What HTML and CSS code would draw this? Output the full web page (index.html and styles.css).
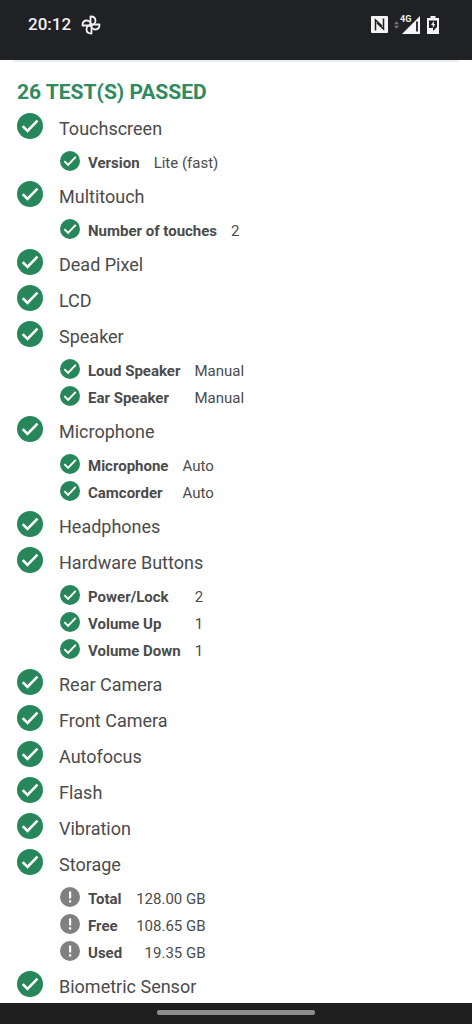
FILE: index.html
```html
<!DOCTYPE html>
<html lang="en">
<head>
<meta charset="utf-8">
<meta name="viewport" content="width=device-width, initial-scale=1">
<title>Test results</title>
<link rel="stylesheet" href="styles.css">
</head>
<body>
<svg class="sprite" aria-hidden="true">
  <symbol id="pass" viewBox="0 0 26 26"><circle cx="13" cy="13" r="13" fill="#28875a"/><path d="M5.700 13.200l4.800 4.800 10-10.300" fill="none" stroke="#fff" stroke-width="2.600"/></symbol>
  <symbol id="info" viewBox="0 0 20 20"><circle cx="10" cy="10" r="10" fill="#808080"/><path d="M9 4.6h2.200v7H9zM9 13.200h2.200v2.200H9z" fill="#fff"/></symbol>
</svg>
<header class="status">
  <span class="clock">20:12</span>
  <svg class="fan" viewBox="0 0 20 20" aria-hidden="true"><g fill="none" stroke="#f2f2f4" stroke-width="1.800" stroke-linejoin="round"><path d="M9.500 10V1.500c3.200 0 5 2 5 4.300S12.500 10 9.500 10z"/><path d="M10 9.500h8.500c0 3.200-2 5-4.300 5S10 12.500 10 9.500z"/><path d="M10.500 10v8.500c-3.200 0-5-2-5-4.300S7.500 10 10.500 10z"/><path d="M10 10.500H1.500c0-3.200 2-5 4.300-5S10 7.500 10 10.500z"/></g></svg>
  <div class="signals">
    <svg class="nfc" viewBox="0 0 17 17" aria-hidden="true"><rect width="17" height="17" rx="1" fill="#f5f5f5"/><path d="M4.500 14.500V4l6.500 6M12.500 2.500V13L6 7" fill="none" stroke="#202124" stroke-width="1.500"/></svg>
    <svg class="data" viewBox="0 0 6 10" aria-hidden="true"><path d="M0 4l3-3.500L6 4zM0 6l3 3.500L6 6z" fill="#777"/></svg>
    <span class="cell">
      <svg class="bars" viewBox="0 0 18 18" aria-hidden="true"><path d="M18 0v18H0z" fill="#f5f5f5"/><path d="M15 5.500v10" stroke="#202124" stroke-width="1.800"/></svg>
      <span class="net">4G</span>
    </span>
    <svg class="battery" viewBox="0 0 12 18" aria-hidden="true"><path d="M3.500 0h5v2H12v16H0V2h3.500z" fill="#f5f5f5"/><path d="M2 4.500h8v6.500L6 15v-3H2z" fill="#202124"/><path d="M6.800 5L4 9h1.800v3L8.300 8H6.800z" fill="#f5f5f5"/></svg>
  </div>
</header>
<main class="results">
  <hr class="rule">
  <h1 class="title">26 TEST(S) PASSED</h1>
  <ul class="tests">
    <li><h2 class="test"><svg class="mark"><use href="#pass"/></svg>Touchscreen</h2>
      <table class="details"><tr><th scope="row"><svg class="dot"><use href="#pass"/></svg>Version</th><td>Lite (fast)</td></tr></table></li>
    <li><h2 class="test"><svg class="mark"><use href="#pass"/></svg>Multitouch</h2>
      <table class="details"><tr><th scope="row"><svg class="dot"><use href="#pass"/></svg>Number of touches</th><td>2</td></tr></table></li>
    <li><h2 class="test"><svg class="mark"><use href="#pass"/></svg>Dead Pixel</h2></li>
    <li><h2 class="test"><svg class="mark"><use href="#pass"/></svg>LCD</h2></li>
    <li><h2 class="test"><svg class="mark"><use href="#pass"/></svg>Speaker</h2>
      <table class="details"><tr><th scope="row"><svg class="dot"><use href="#pass"/></svg>Loud Speaker</th><td>Manual</td></tr><tr><th scope="row"><svg class="dot"><use href="#pass"/></svg>Ear Speaker</th><td>Manual</td></tr></table></li>
    <li><h2 class="test"><svg class="mark"><use href="#pass"/></svg>Microphone</h2>
      <table class="details"><tr><th scope="row"><svg class="dot"><use href="#pass"/></svg>Microphone</th><td>Auto</td></tr><tr><th scope="row"><svg class="dot"><use href="#pass"/></svg>Camcorder</th><td>Auto</td></tr></table></li>
    <li><h2 class="test"><svg class="mark"><use href="#pass"/></svg>Headphones</h2></li>
    <li><h2 class="test"><svg class="mark"><use href="#pass"/></svg>Hardware Buttons</h2>
      <table class="details"><tr><th scope="row"><svg class="dot"><use href="#pass"/></svg>Power/Lock</th><td>2</td></tr><tr><th scope="row"><svg class="dot"><use href="#pass"/></svg>Volume Up</th><td>1</td></tr><tr><th scope="row"><svg class="dot"><use href="#pass"/></svg>Volume Down</th><td>1</td></tr></table></li>
    <li><h2 class="test"><svg class="mark"><use href="#pass"/></svg>Rear Camera</h2></li>
    <li><h2 class="test"><svg class="mark"><use href="#pass"/></svg>Front Camera</h2></li>
    <li><h2 class="test"><svg class="mark"><use href="#pass"/></svg>Autofocus</h2></li>
    <li><h2 class="test"><svg class="mark"><use href="#pass"/></svg>Flash</h2></li>
    <li><h2 class="test"><svg class="mark"><use href="#pass"/></svg>Vibration</h2></li>
    <li><h2 class="test"><svg class="mark"><use href="#pass"/></svg>Storage</h2>
      <table class="details amounts"><tr><th scope="row"><svg class="dot"><use href="#info"/></svg>Total</th><td>128.00 GB</td></tr><tr><th scope="row"><svg class="dot"><use href="#info"/></svg>Free</th><td>108.65 GB</td></tr><tr><th scope="row"><svg class="dot"><use href="#info"/></svg>Used</th><td>19.35 GB</td></tr></table></li>
    <li><h2 class="test"><svg class="mark"><use href="#pass"/></svg>Biometric Sensor</h2></li>
  </ul>
</main>
<footer class="nav"><div class="pill"></div></footer>
</body>
</html>
```

FILE: styles.css
```css
* { box-sizing: border-box; }
body {
  margin: 0;
  height: 100vh;
  display: flex;
  flex-direction: column;
  background: #fff;
  color: #4b4b4b;
  font-family: Roboto, "Liberation Sans", sans-serif;
  overflow: hidden;
}
.sprite { display: none; }
svg { flex: none; display: block; }
.status {
  flex: none;
  display: flex;
  align-items: center;
  padding: 14px 33px 25px 28px;
  background: #202124;
  color: #f2f2f4;
}
.clock { font-size: 17px; line-height: 21px; font-weight: 500; }
.fan { width: 20px; height: 20px; margin-left: 10px; }
.signals { display: flex; align-items: center; margin-left: auto; }
.nfc { width: 17px; height: 17px; margin-right: 6px; }
.data { width: 5px; height: 10px; margin-right: 3px; }
.cell { position: relative; margin-right: 7px; }
.bars { width: 18px; height: 18px; }
.net {
  position: absolute;
  left: -2px;
  top: -1px;
  font-size: 9px;
  line-height: 9px;
  font-weight: 700;
  background: #202124;
}
.battery { width: 12px; height: 18px; }
.results { flex: 1; min-height: 0; overflow: hidden; }
.rule { height: 2px; margin: 0 13px; border: 0; background: #eceeee; }
.title {
  margin: 18px 17px 5px;
  font-size: 21px;
  line-height: 25px;
  font-weight: 700;
  color: #2f8a60;
}
.tests { margin: 0; padding: 0; list-style: none; }
.test {
  display: flex;
  align-items: flex-start;
  gap: 16px;
  height: 36px;
  margin: 0;
  padding: 3px 17px 0;
  font-size: 18px;
  line-height: 32px;
  font-weight: 400;
}
.mark { width: 26px; height: 26px; }
.details {
  margin: 4px 0 1px 60px;
  border-collapse: collapse;
  font-size: 15px;
  line-height: 27px;
}
.details th, .details td { padding: 0; height: 27px; text-align: left; font-weight: 400; }
.details th { display: flex; align-items: flex-start; gap: 8px; font-weight: 700; }
.details td { padding-left: 14px; }
.details.amounts td { text-align: right; }
.dot { width: 20px; height: 20px; margin-top: 1px; }
.nav { flex: none; display: flex; justify-content: center; padding: 7px 0 9px; background: #1f1f1f; }
.pill { width: 33.3%; height: 5px; border-radius: 2px; background: #8c8c8c; }
```
